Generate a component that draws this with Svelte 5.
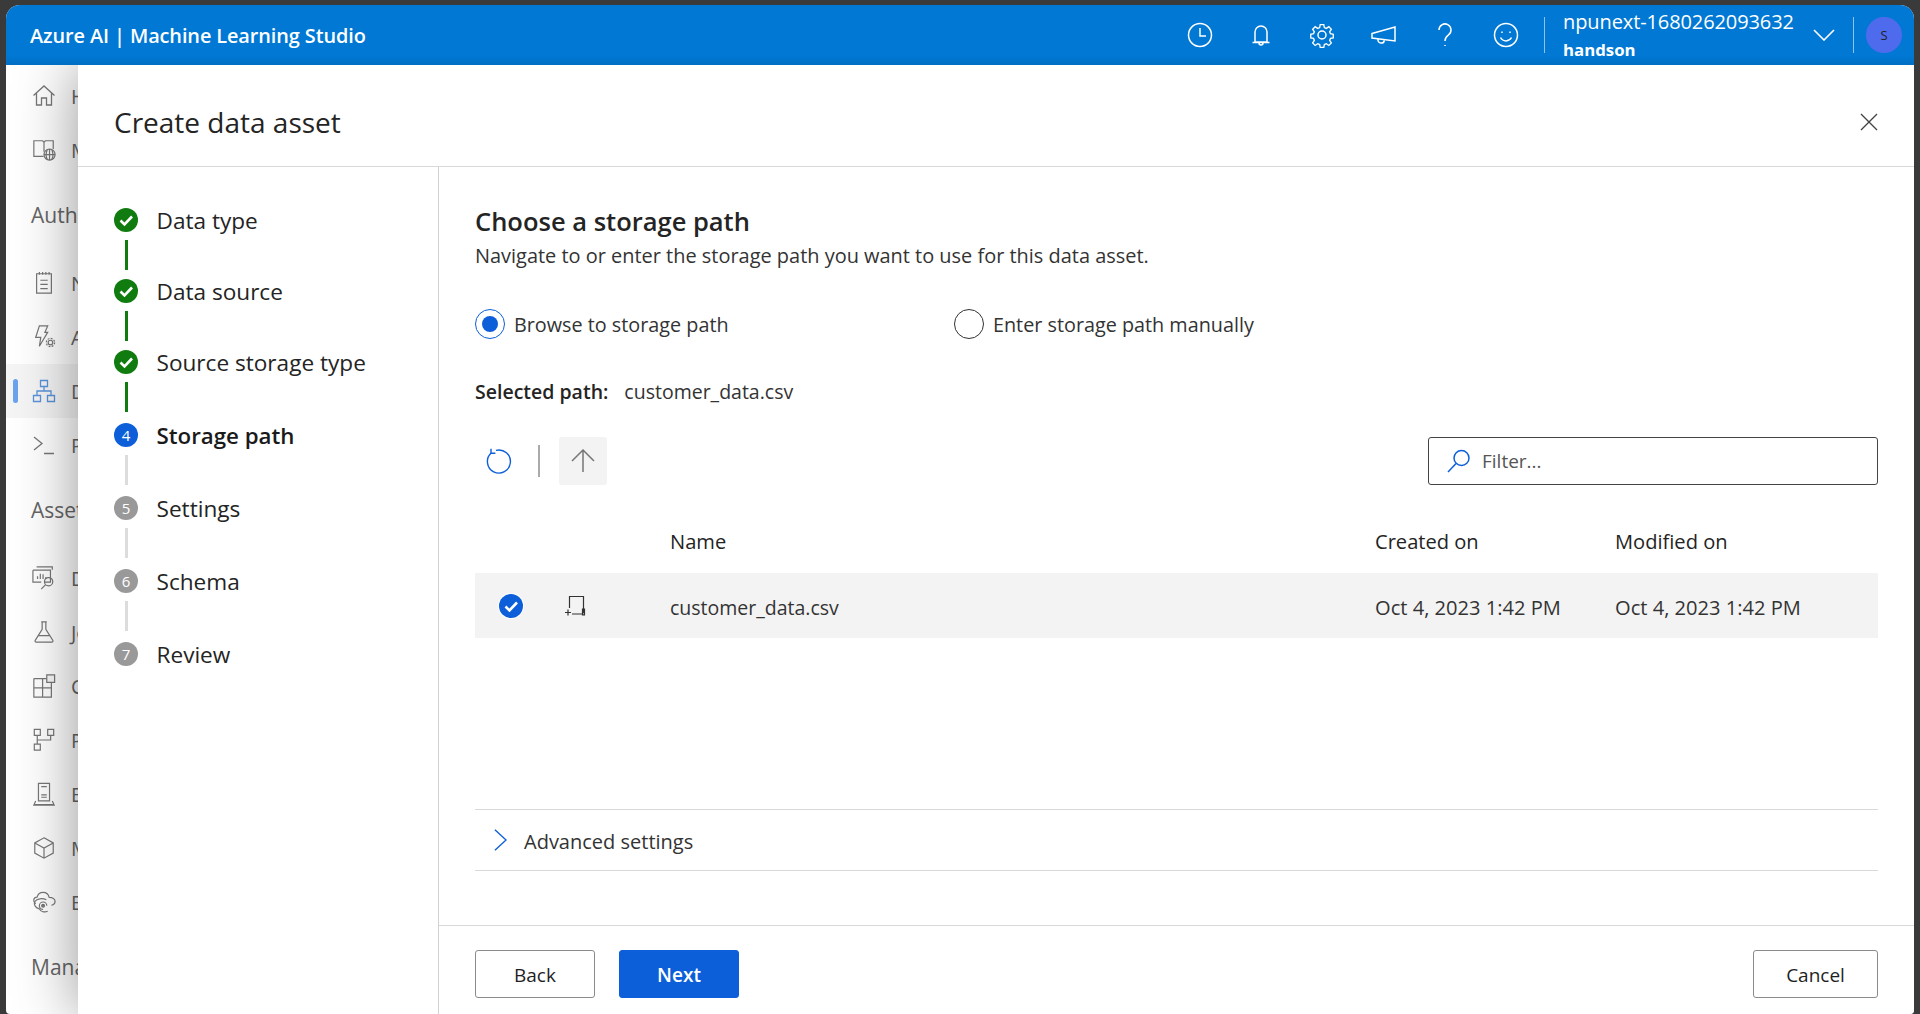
<script>
  const steps = [
    { label: 'Data type', state: 'done' },
    { label: 'Data source', state: 'done' },
    { label: 'Source storage type', state: 'done' },
    { label: 'Storage path', state: 'active', n: 4 },
    { label: 'Settings', state: 'todo', n: 5 },
    { label: 'Schema', state: 'todo', n: 6 },
    { label: 'Review', state: 'todo', n: 7 }
  ];
</script>

<div class="window">
  <header class="topbar">
    <div class="brand">Azure AI | Machine Learning Studio</div>
    <div class="top-icons">
      <svg viewBox="0 0 26 26"><circle cx="13" cy="13" r="11.5"/><path d="M13 6v8h6"/></svg>
      <svg viewBox="0 0 26 26"><path d="M7 20V10a6 6 0 0 1 12 0v10zM4.5 20.5h17M11 21a2 2 0 0 0 4 0"/></svg>
      <svg viewBox="0 0 26 26"><circle cx="13" cy="13" r="4"/><path d="M11 1.5h4l.6 3.3 2.2.9 2.8-1.9 2.8 2.8-1.9 2.8.9 2.2 3.1.6v4l-3.1.6-.9 2.2 1.9 2.8-2.8 2.8-2.8-1.9-2.2.9-.6 3.1h-4l-.6-3.1-2.2-.9-2.8 1.9-2.8-2.8 1.9-2.8-.9-2.2-3.1-.6v-4l3.1-.6.9-2.2-1.9-2.8 2.8-2.8 2.8 1.9 2.2-.9z" transform="translate(1.3 1.3) scale(.9)"/></svg>
      <svg viewBox="0 0 26 26"><path d="M1 11.5l23-6.5v14L1 16zM7 17.2a3.2 3.2 0 0 0 6.3 1.3"/></svg>
      <svg viewBox="0 0 26 26"><path d="M7 8a6 6 0 1 1 9.5 4.8C14 14.600 13 15.500 13 19M13 23v1"/></svg>
      <svg viewBox="0 0 26 26"><circle cx="13" cy="13" r="11.500"/><path d="M7.500 15.500c2.500 4.500 8.500 4.500 11 0M9 9.500v1.500M17 9.500v1.500"/></svg>
    </div>
    <div class="account">
      <div class="acct-name">npunext-1680262093632</div>
      <div class="acct-sub">handson</div>
    </div>
    <svg class="acct-chev" viewBox="0 0 22 12"><path d="M1 1l10 10L21 1"/></svg>
    <div class="avatar-wrap"><div class="avatar">S</div></div>
  </header>

  <div class="body">
    <nav class="sidebar">
      <div class="item"><svg viewBox="0 0 24 24"><path d="M1.500 11.500L12 2l10.500 9.500M4.500 9.500V21h5v-7h5v7h5V9.500"/></svg><span>Home</span></div>
      <div class="item"><svg viewBox="0 0 26 24"><path d="M12.500 19H2V2h9.500l1.500 1.500L14.500 2H23v9M13 3.500V14"/><circle cx="19" cy="17" r="6"/><path d="M13 17h12M19 11v12M16.500 12c-1.500 3-1.500 7 0 10M21.500 12c1.500 3 1.500 7 0 10"/></svg><span>Model catalog</span></div>
      <div class="section">Authoring</div>
      <div class="item"><svg viewBox="0 0 24 26"><path d="M4 3h16v21H4zM7 1v3M10.500 1v3M14 1v3M17.500 1v3M8 10h8M8 14.500h8M8 19h8"/></svg><span>Notebooks</span></div>
      <div class="item"><svg viewBox="0 0 26 26"><path d="M8 1h9l-3 7h3l-9 15 1.500-9.500H4z"/><circle cx="20" cy="19" r="2.500"/><circle cx="20" cy="19" r="4.500" stroke-dasharray="2 1.500"/></svg><span>Automated ML</span></div>
      <div class="item active"><svg viewBox="0 0 24 24"><path d="M8.500 1.500h7v6h-7zM1.500 16.500h7v6h-7zM15.500 16.500h7v6h-7zM12 7.500v4.500M5 16.500V12h14v4.500"/></svg><span>Designer</span></div>
      <div class="item"><svg viewBox="0 0 24 24"><path d="M2 4l8 6.500L2 17M12 20.500h10"/></svg><span>Prompt flow</span></div>
      <div class="section">Assets</div>
      <div class="item"><svg viewBox="0 0 26 26"><path d="M5 1h17v3M1 4.500h19v13h-7M1 4.500v13h9M6 14v-3M9 14V8.500M12 14v-5M15 14v-2"/><circle cx="18" cy="17" r="4.500"/><path d="M14.500 20.500L10 25"/></svg><span>Data</span></div>
      <div class="item"><svg viewBox="0 0 24 26"><path d="M9 2h6M10 2v8L2.500 22c-.6 1 0 2 1 2h17c1 0 1.600-1 1-2L14 10V2M6 17h12"/></svg><span>Jobs</span></div>
      <div class="item"><svg viewBox="0 0 26 26"><path d="M2 5h19M2 5v20h19V5M11.500 5v20M2 15h19"/><path d="M16 1h8.500v8H16z" fill="#f8f8f8"/></svg><span>Components</span></div>
      <div class="item"><svg viewBox="0 0 24 26"><path d="M1.500 1.500h6.500v6.500H1.500zM16 1.500h6.500v6.500H16zM1.500 17.500h6.500V24H1.500zM4.700 8v9.500M4.700 13h14.500V8"/></svg><span>Pipelines</span></div>
      <div class="item"><svg viewBox="0 0 24 26"><path d="M6 1.500h12v19H6zM9 5h6M9 14h6M9 16.500h6M3 20.500l-2 4.500h22l-2-4.500M1 24.500h22"/></svg><span>Environments</span></div>
      <div class="item"><svg viewBox="0 0 24 26"><path d="M12 2l10 5.500v11L12 24 2 18.500v-11zM2 7.500L12 13l10-5.500M12 13v11"/></svg><span>Models</span></div>
      <div class="item"><svg viewBox="0 0 26 24"><path d="M4 14C.500 11.500 1.500 7 5.500 6.800 6.500 3 9 1.500 12 1.500c3.500 0 6 2.300 6.600 5.500 3.500 0 6.400 1.900 6.400 4.500 0 2-1.600 3.500-4 4"/><path d="M15.500 9.500C11 7.500 5.500 8.500 3 11.500c-1.500 3.500 1 7 5 8 1.500 3 5.500 3.800 9 2.500"/><path d="M16 16a4 4 0 1 0-4 4"/><circle cx="12" cy="16" r="1.500" fill="#777"/></svg><span>Endpoints</span></div>
      <div class="section">Manage</div>
    </nav>

    <section class="panel">
      <div class="panel-head">
        <h1>Create data asset</h1>
        <svg class="close" viewBox="0 0 18 18"><path d="M1 1l16 16M17 1L1 17"/></svg>
      </div>
      <div class="panel-main">
        <aside class="stepper">
          {#each steps as s, i}
            <div class="step {s.state}">
              <span class="dot">
                {#if s.state === 'done'}
                  <svg viewBox="0 0 24 24"><path d="M6.500 12.500l4 4 7.500-8"/></svg>
                {:else}{s.n}{/if}
              </span>
              <span class="step-label">{s.label}</span>
            </div>
            {#if i < steps.length - 1}
              <div class="conn {s.state === 'done' ? 'green' : ''} {i >= 2 ? 'tall' : ''}"></div>
            {/if}
          {/each}
        </aside>

        <div class="content">
          <div class="scroll">
            <h2>Choose a storage path</h2>
            <p class="sub">Navigate to or enter the storage path you want to use for this data asset.</p>

            <div class="radios">
              <label class="radio on"><span class="ring"><span class="pip"></span></span>Browse to storage path</label>
              <label class="radio"><span class="ring"></span>Enter storage path manually</label>
            </div>

            <div class="selected"><b>Selected path:</b><span>customer_data.csv</span></div>

            <div class="toolbar">
              <button class="tool" aria-label="Refresh"><svg viewBox="0 0 26 26"><path d="M5.200 5A11.500 11.500 0 1 0 10 2.400"/><path d="M5 .8v4.400h4.400" /></svg></button>
              <span class="tool-sep"></span>
              <button class="tool up" aria-label="Up"><svg viewBox="0 0 24 24"><path d="M12 23V1M1 12L12 1l11 11"/></svg></button>
              <div class="filter">
                <svg viewBox="0 0 24 24"><circle cx="14.500" cy="9" r="7.500"/><path d="M9 14.500L1 23"/></svg>
                <span>Filter...</span>
              </div>
            </div>

            <div class="thead">
              <span class="c-check"></span><span class="c-icon"></span>
              <span class="c-name">Name</span><span class="c-date">Created on</span><span class="c-mod">Modified on</span>
            </div>
            <div class="trow">
              <span class="c-check"><span class="tick"><svg viewBox="0 0 24 24"><path d="M6.500 12.500l4 4 7.500-8"/></svg></span></span>
              <span class="c-icon"><svg viewBox="0 0 22 22"><path d="M5.500 13V1.500h14v16.500M8 19h11.500M1 17.500h6M4 14.500v6M18.500 14v6h2v-6z"/></svg></span>
              <span class="c-name file">customer_data.csv</span><span class="c-date">Oct 4, 2023 1:42 PM</span><span class="c-mod">Oct 4, 2023 1:42 PM</span>
            </div>

            <div class="advanced">
              <svg viewBox="0 0 14 24"><path d="M1 1l12 11L1 23"/></svg>
              <span>Advanced settings</span>
            </div>
          </div>
          <footer class="foot">
            <button class="btn">Back</button>
            <button class="btn primary">Next</button>
            <button class="btn cancel">Cancel</button>
          </footer>
        </div>
      </div>
    </section>
  </div>
</div>

<style>
  :global(body) { margin: 0; background: #3a3a3a; overflow: hidden; }
  * { box-sizing: border-box; }
  .window {
    margin: 5px 6px 0;
    height: 1009px;
    border-radius: 14px 14px 4px 4px;
    overflow: hidden;
    background: #fff;
    display: flex;
    flex-direction: column;
    font-family: "Open Sans", "Noto Sans", sans-serif;
    color: #242424;
  }
  .topbar {
    height: 60px;
    flex: none;
    display: flex;
    align-items: center;
    background: linear-gradient(#0078d4 85%, #006fc3);
    color: #fff;
    position: relative;
    z-index: 2;
  }
  .brand { margin-left: 24px; font-size: 19.900px; font-weight: 600; flex: 1; letter-spacing: -.1px; }
  .top-icons { display: flex; gap: 35.200px; padding-right: 25px; border-right: 1px solid rgba(255,255,255,.55); height: 36px; align-items: center; }
  .top-icons svg { width: 26px; height: 26px; fill: none; stroke: #fff; stroke-width: 1.500; }
  .account { margin-left: 18px; width: 250px; display: flex; flex-direction: column; gap: 6px; }
  .acct-name { font-size: 20px; line-height: 24px; letter-spacing: -.1px; white-space: nowrap; }
  .acct-sub { font-size: 16.800px; font-weight: 700; line-height: 20px; }
  .acct-chev { width: 22px; height: 12px; fill: none; stroke: #fff; stroke-width: 1.600; margin: 0 18px 0 0; }
  .avatar-wrap { height: 36px; border-left: 1px solid rgba(255,255,255,.55); padding-left: 12px; }
  .avatar { width: 36px; height: 36px; border-radius: 50%; background: #4f6bed; color: #222; font-size: 13px; display: flex; align-items: center; justify-content: center; margin-right: 12px; }

  .body { flex: 1; display: flex; overflow: hidden; min-height: 0; }
  .sidebar { width: 72px; flex: none; overflow: hidden; padding-top: 4px; color: #666; white-space: nowrap; }
  .item { height: 54px; display: flex; align-items: center; padding-left: 26px; gap: 15px; font-size: 20px; position: relative; }
  .item svg { width: 24px; height: 24px; fill: none; stroke: #777; stroke-width: 1.300; flex: none; }
  .item.active { background: #f5f5f5; }
  .item.active::before { content: ""; position: absolute; left: 7px; top: 15px; width: 5px; height: 24px; border-radius: 3px; background: #6aa3ee; }
  .item.active svg { stroke: #5b93dc; }
  .section { height: 79px; line-height: 77px; padding-left: 25px; font-size: 21px; font-weight: 500; color: #666; }

  .panel {
    flex: 1;
    min-width: 0;
    position: relative;
    z-index: 1;
    background: #fff;
    box-shadow: 0 0 58px rgba(0,0,0,.42);
    display: flex;
    flex-direction: column;
  }
  .panel-head { height: 102px; flex: none; border-bottom: 1px solid #d9d9d9; display: flex; align-items: center; justify-content: space-between; padding: 12px 36px 0 36px; }
  h1 { font-size: 28px; font-weight: 400; margin: 0; color: #242424; }
  .close { width: 18px; height: 18px; fill: none; stroke: #424242; stroke-width: 1.300; }
  .panel-main { flex: 1; display: flex; min-height: 0; }
  .stepper { width: 361px; flex: none; border-right: 1px solid #d2d2d2; padding: 41px 0 0 36px; display: flex; flex-direction: column; }
  .step { height: 24px; display: flex; align-items: center; gap: 18.500px; font-size: 22.600px; line-height: 24px; color: #242424; white-space: nowrap; }
  .step-label { position: relative; top: 1px; }
  .step.active { font-weight: 600; font-size: 22.300px; color: #1a1a1a; }
  .dot { width: 24px; height: 24px; border-radius: 50%; flex: none; display: flex; align-items: center; justify-content: center; font-size: 15px; color: #fff; font-weight: 400; background: #999; }
  .step.done .dot { background: #107c10; }
  .step.active .dot { background: #0c5fd9; }
  .dot svg { width: 24px; height: 24px; fill: none; stroke: #fff; stroke-width: 2.600; }
  .conn { width: 3px; height: 30px; margin: 8px 0 9px 11px; background: #dcdcdc; }
  .conn.tall { margin-bottom: 11px; }
  .conn.green { background: #107c10; }

  .content { flex: 1; min-width: 0; display: flex; flex-direction: column; }
  .scroll { flex: 1; padding: 0 36px; min-height: 0; }
  h2 { margin: 36px 0 0; font-size: 25.500px; font-weight: 600; line-height: 36px; color: #242424; white-space: nowrap; }
  .sub { margin: 4px 0 0; font-size: 19.950px; line-height: 26px; color: #333; white-space: nowrap; }
  .radios { margin-top: 40px; display: flex; height: 30px; }
  .radio { display: flex; align-items: center; gap: 9px; font-size: 19.800px; color: #333; }
  .radio:first-child { width: 479px; }
  .ring { width: 30px; height: 30px; border-radius: 50%; border: 1px solid #333; display: flex; align-items: center; justify-content: center; flex: none; }
  .radio.on .ring { border-color: #0c5fd9; }
  .pip { width: 16px; height: 16px; border-radius: 50%; background: #0c5fd9; }
  .selected { margin-top: 39px; display: flex; gap: 16px; font-size: 19.500px; line-height: 28px; color: #333; }
  .selected b { font-weight: 600; color: #242424; }
  .toolbar { margin-top: 31px; height: 48px; display: flex; align-items: center; }
  .tool { width: 48px; height: 48px; border: 0; background: none; padding: 0; display: flex; align-items: center; justify-content: center; border-radius: 3px; }
  .tool svg { width: 26px; height: 26px; fill: none; stroke: #0c5fd9; stroke-width: 1.400; }
  .tool-sep { width: 2px; height: 32px; background: #aaa; margin: 0 19px 0 15px; }
  .tool.up { background: #f3f3f3; }
  .tool.up svg { width: 24px; height: 24px; stroke: #777; stroke-width: 1.500; }
  .filter { margin-left: auto; width: 450px; height: 48px; border: 1px solid #444; border-radius: 3px; display: flex; align-items: center; padding-left: 18px; gap: 11px; font-size: 19px; color: #555; }
  .filter svg { width: 24px; height: 24px; fill: none; stroke: #0c5fd9; stroke-width: 1.500; }
  .thead, .trow { display: flex; align-items: center; font-size: 20.100px; white-space: nowrap; }
  .thead { height: 88px; padding-top: 24px; color: #242424; font-weight: 500; }
  .trow { height: 65px; background: #f3f3f3; color: #333; }
  .c-check { width: 72px; flex: none; display: flex; padding-left: 24px; }
  .c-icon { width: 123px; flex: none; display: flex; padding-left: 17px; }
  .c-icon svg { width: 22px; height: 22px; fill: none; stroke: #333; stroke-width: 1.200; }
  .c-name { width: 705px; flex: none; }
  .c-name.file { font-size: 19.500px; }
  .c-date { width: 240px; flex: none; }
  .trow .c-name, .trow .c-date, .trow .c-mod { padding-top: 4px; }
  .tick { width: 24px; height: 24px; border-radius: 50%; background: #0c5fd9; display: flex; box-shadow: 0 0 0 1px #fff; }
  .tick svg { width: 24px; height: 24px; fill: none; stroke: #fff; stroke-width: 2.600; }
  .advanced { margin-top: 171px; height: 62px; border-top: 1px solid #d9d9d9; border-bottom: 1px solid #d9d9d9; display: flex; align-items: center; padding-left: 19px; gap: 17px; font-size: 20px; color: #333; }
  .advanced span { padding-top: 2px; }
  .advanced svg { width: 13px; height: 24px; fill: none; stroke: #0c5fd9; stroke-width: 1.500; }
  .foot { height: 89px; flex: none; border-top: 1px solid #d9d9d9; display: flex; align-items: flex-start; padding: 24px 36px 0; gap: 24px; }
  .btn { height: 48px; width: 120px; font: 500 19px "Open Sans", "Noto Sans", sans-serif; color: #1f1f1f; background: #fff; border: 1px solid #8a8a8a; border-radius: 3px; padding: 2px 0 0; }
  .btn.primary { background: #0c5fd9; border-color: #0c5fd9; color: #fff; font-weight: 600; }
  .btn.cancel { margin-left: auto; width: 125px; }
</style>
